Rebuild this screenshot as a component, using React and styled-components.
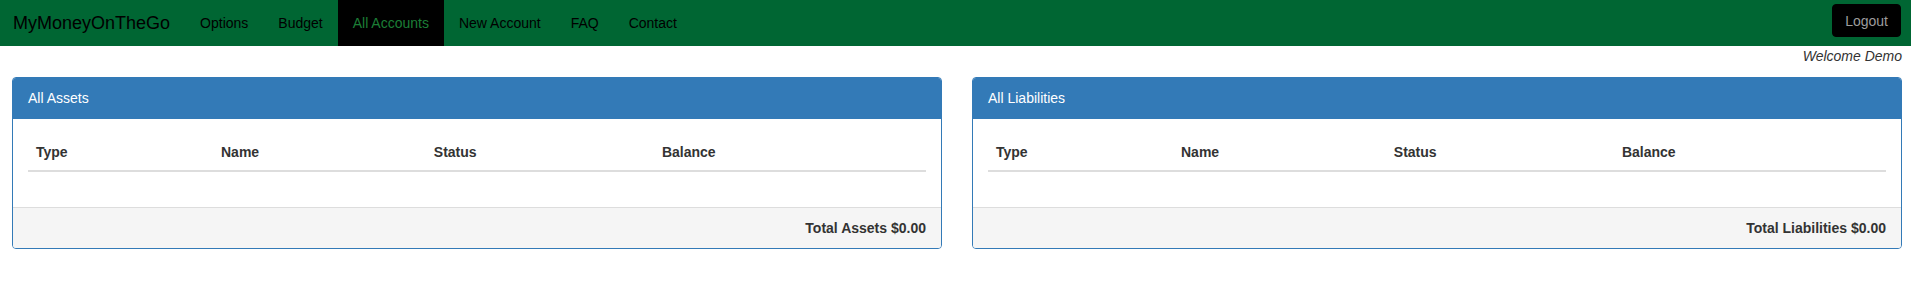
import React from "react";
import styled, { createGlobalStyle } from "styled-components";

const Global = createGlobalStyle`
  * { box-sizing: border-box; }
  html, body { margin: 0; padding: 0; background: #fff; }
  body {
    font-family: "Liberation Sans", Arial, sans-serif;
    font-size: 14px;
    line-height: 20px;
    color: #333;
  }
`;

const NavBar = styled.nav`
  display: flex;
  align-items: stretch;
  height: 46px;
  background: #006633;
  padding: 0 10px 0 0;
`;

const Brand = styled.a`
  display: flex;
  align-items: center;
  padding: 0 15px 0 13px;
  font-size: 18px;
  color: #000;
  text-decoration: none;
`;

const NavList = styled.ul`
  display: flex;
  list-style: none;
  margin: 0;
  padding: 0;
  flex: 1;
`;

const NavItem = styled.li`
  display: flex;
  align-items: center;
  padding: 0 15px;
  font-size: 14px;
  color: ${(p) => (p.$active ? "#1c7e36" : "#000")};
  background: ${(p) => (p.$active ? "#000" : "transparent")};
`;

const LogoutButton = styled.button`
  align-self: flex-start;
  margin-top: 4px;
  height: 33px;
  padding: 0 12px;
  background: #000;
  border: 1px solid #000;
  border-radius: 4px;
  color: #9d9d9d;
  font-family: "Liberation Sans", Arial, sans-serif;
  font-size: 14px;
`;

const Welcome = styled.div`
  text-align: right;
  font-style: italic;
  padding: 0 9px 0 0;
  height: 31px;
  line-height: 20px;
`;

const Panels = styled.div`
  display: grid;
  grid-template-columns: 1fr 1fr;
  gap: 30px;
  padding: 0 9px 0 12px;
`;

const Panel = styled.section`
  border: 1px solid #337ab7;
  border-radius: 4px;
  background: #fff;
  overflow: hidden;
`;

const PanelHeading = styled.div`
  background: #337ab7;
  color: #fff;
  padding: 10px 15px;
  border-bottom: 1px solid #337ab7;
  line-height: 20px;
`;

const PanelBody = styled.div`
  padding: 15px;
`;

const Table = styled.table`
  width: 100%;
  border-collapse: collapse;
  margin-bottom: 20px;
`;

const Th = styled.th`
  text-align: left;
  padding: 8px;
  line-height: 20px;
  font-weight: bold;
  border-bottom: 2px solid #ddd;
  width: ${(p) => p.$w};
`;

const PanelFooter = styled.div`
  background: #f5f5f5;
  border-top: 1px solid #ddd;
  padding: 10px 15px;
  text-align: right;
  font-weight: bold;
  line-height: 20px;
`;

const cols = [
  ["Type", "20.6%"],
  ["Name", "23.7%"],
  ["Status", "25.4%"],
  ["Balance", "30.3%"],
];

function AccountPanel({ title, totalLabel }) {
  return (
    <Panel>
      <PanelHeading>{title}</PanelHeading>
      <PanelBody>
        <Table>
          <thead>
            <tr>
              {cols.map(([c, w]) => (
                <Th key={c} $w={w}>
                  {c}
                </Th>
              ))}
            </tr>
          </thead>
          <tbody />
        </Table>
      </PanelBody>
      <PanelFooter>{totalLabel} $0.00</PanelFooter>
    </Panel>
  );
}

export default function App() {
  const items = ["Options", "Budget", "All Accounts", "New Account", "FAQ", "Contact"];
  return (
    <>
      <Global />
      <NavBar>
        <Brand>MyMoneyOnTheGo</Brand>
        <NavList>
          {items.map((i) => (
            <NavItem key={i} $active={i === "All Accounts"}>
              {i}
            </NavItem>
          ))}
        </NavList>
        <LogoutButton>Logout</LogoutButton>
      </NavBar>
      <Welcome>Welcome Demo</Welcome>
      <Panels>
        <AccountPanel title="All Assets" totalLabel="Total Assets" />
        <AccountPanel title="All Liabilities" totalLabel="Total Liabilities" />
      </Panels>
    </>
  );
}
